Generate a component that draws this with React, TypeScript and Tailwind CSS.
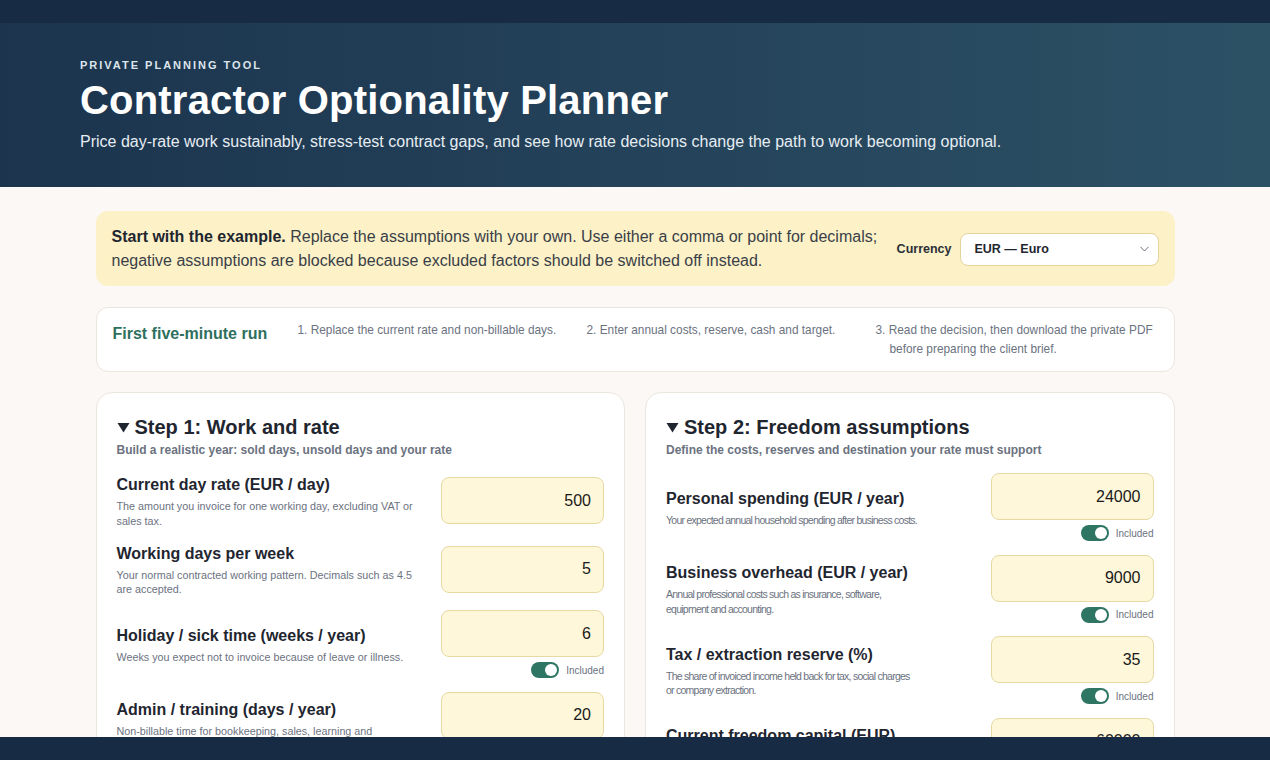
import React from "react";

type Field = {
  label: string;
  desc: string;
  value: string;
  toggle?: boolean;
};

const step1: Field[] = [
  {
    label: "Current day rate (EUR / day)",
    desc: "The amount you invoice for one working day, excluding VAT or sales tax.",
    value: "500",
  },
  {
    label: "Working days per week",
    desc: "Your normal contracted working pattern. Decimals such as 4.5 are accepted.",
    value: "5",
  },
  {
    label: "Holiday / sick time (weeks / year)",
    desc: "Weeks you expect not to invoice because of leave or illness.",
    value: "6",
    toggle: true,
  },
  {
    label: "Admin / training (days / year)",
    desc: "Non-billable time for bookkeeping, sales, learning and business development.",
    value: "20",
    toggle: true,
  },
];

const step2: Field[] = [
  {
    label: "Personal spending (EUR / year)",
    desc: "Your expected annual household spending after business costs.",
    value: "24000",
    toggle: true,
  },
  {
    label: "Business overhead (EUR / year)",
    desc: "Annual professional costs such as insurance, software, equipment and accounting.",
    value: "9000",
    toggle: true,
  },
  {
    label: "Tax / extraction reserve (%)",
    desc: "The share of invoiced income held back for tax, social charges or company extraction.",
    value: "35",
    toggle: true,
  },
  {
    label: "Current freedom capital (EUR)",
    desc: "Savings and investments already available for the optionality goal.",
    value: "60000",
    toggle: true,
  },
];

function Toggle() {
  return (
    <div className="flex justify-end items-center gap-[7px] mt-[5px] h-[16px]">
      <div className="w-[28px] h-[16px] rounded-full bg-[#2f7563] flex items-center justify-end pr-[2px]">
        <div className="w-[12px] h-[12px] rounded-full bg-white" />
      </div>
      <span className="text-[10px] text-[#6b7280]">Included</span>
    </div>
  );
}

function FieldRow({ f, narrow }: { f: Field; narrow?: boolean }) {
  return (
    <div className="grid grid-cols-[1fr_163px] gap-x-[16px] items-center">
      <div>
        <div className="text-[16px] leading-[24px] font-bold text-[#1f2630]">{f.label}</div>
        <div
          className={
            narrow
              ? "mt-[2px] text-[10.5px] leading-[14.5px] text-[#6b7280] tracking-[-0.75px] max-w-[252.5px]"
              : "mt-[2px] text-[10.75px] leading-[14.5px] text-[#6b7280] max-w-[299px]"
          }
        >
          {f.desc}
        </div>
      </div>
      <div>
        <div className="h-[47px] rounded-[8px] border border-[#e7d9a4] bg-[#fef7d9] flex items-center justify-end pr-[12px] text-[16px] text-[#1a1a1a]">
          {f.value}
        </div>
        {f.toggle ? <Toggle /> : null}
      </div>
    </div>
  );
}

function StepCard({
  title,
  sub,
  fields,
  narrow,
}: {
  title: string;
  sub: string;
  fields: Field[];
  narrow?: boolean;
}) {
  return (
    <div className="rounded-[16px] border border-[#ebe6df] bg-white px-[20px] pt-[20px] pb-[24px]">
      <div className="flex items-center gap-[5px] h-[28px]">
        <svg width="13" height="11" viewBox="0 0 13 11" className="shrink-0">
          <path d="M0.5 1 L12.5 1 L6.5 10.5 Z" fill="#1f2630" />
        </svg>
        <span className="text-[20px] font-bold text-[#1f2630]">{title}</span>
      </div>
      <div className="text-[12px] leading-[16px] font-bold text-[#6b7280] mt-[1px]">{sub}</div>
      <div className="mt-[15px] flex flex-col gap-[13.5px]">
        {fields.map((f) => (
          <FieldRow key={f.label} f={f} narrow={narrow} />
        ))}
      </div>
    </div>
  );
}

export default function App() {
  return (
    <div className="h-screen flex flex-col overflow-hidden font-['Liberation_Sans',Arial,sans-serif]">
      <div className="h-[23px] shrink-0 bg-[#172c44]" />
      <div className="flex-1 overflow-hidden bg-[#fbf8f5]">
        <header className="bg-gradient-to-r from-[#1c344e] to-[#2c5165] px-[80px] pt-[34px] pb-[33px]">
          <div className="text-[11px] leading-[16px] font-bold tracking-[2px] text-[#dde5ec]">
            PRIVATE PLANNING TOOL
          </div>
          <h1 className="mt-[5px] text-[40px] leading-[44px] font-bold text-white tracking-[0.2px]">
            Contractor Optionality Planner
          </h1>
          <p className="mt-[8px] text-[16px] leading-[24px] text-[#e6edf3]">
            Price day-rate work sustainably, stress-test contract gaps, and see how rate decisions change the path to work becoming optional.
          </p>
        </header>

        <main className="w-[1079px] mx-auto pt-[24px]">
          <div className="rounded-[12px] bg-[#fcf1c7] pl-[16px] pr-[16px] pt-[14px] pb-[13px] flex items-center gap-[10px]">
            <p className="flex-1 text-[16px] leading-[24px] text-[#3a3f47]">
              <b className="text-[#1f2630]">Start with the example.</b> Replace the assumptions with your own. Use either a comma or point for decimals; negative assumptions are blocked because excluded factors should be switched off instead.
            </p>
            <div className="flex items-center gap-[8px] shrink-0">
              <span className="text-[12.5px] font-bold text-[#2b3038]">Currency</span>
              <div className="w-[199px] h-[33px] rounded-[8px] border border-[#e3d49c] bg-white flex items-center justify-between pl-[14px] pr-[9px]">
                <span className="text-[12.5px] font-bold text-[#1f2630]">EUR — Euro</span>
                <svg width="9" height="6" viewBox="0 0 9 6">
                  <path d="M0.5 0.8 L4.5 5 L8.5 0.8" fill="none" stroke="#6b7280" strokeWidth="1" />
                </svg>
              </div>
            </div>
          </div>

          <div className="mt-[21px] rounded-[12px] border border-[#ebe6df] bg-white pl-[16px] pr-[16px] pt-[12px] pb-[12px] grid grid-cols-[179px_283px_283px_1fr] gap-x-[6px]">
            <div className="text-[16px] leading-[28px] font-bold text-[#2e6f5e]">First five-minute run</div>
            <div className="pt-[1px] text-[11.85px] leading-[19px] text-[#6b7280] pl-[14px] -indent-[14px]">
              1. Replace the current rate and non-billable days.
            </div>
            <div className="pt-[1px] text-[11.85px] leading-[19px] text-[#6b7280] pl-[14px] -indent-[14px]">
              2. Enter annual costs, reserve, cash and target.
            </div>
            <div className="pt-[1px] text-[11.85px] leading-[19px] text-[#6b7280] pl-[14px] -indent-[14px]">
              3. Read the decision, then download the private PDF before preparing the client brief.
            </div>
          </div>

          <div className="mt-[20px] grid grid-cols-2 gap-[20px] items-start">
            <StepCard
              title="Step 1: Work and rate"
              sub="Build a realistic year: sold days, unsold days and your rate"
              fields={step1}
            />
            <StepCard
              title="Step 2: Freedom assumptions"
              sub="Define the costs, reserves and destination your rate must support"
              fields={step2}
              narrow
            />
          </div>
        </main>
      </div>
      <div className="h-[23px] shrink-0 bg-[#172c44]" />
    </div>
  );
}
